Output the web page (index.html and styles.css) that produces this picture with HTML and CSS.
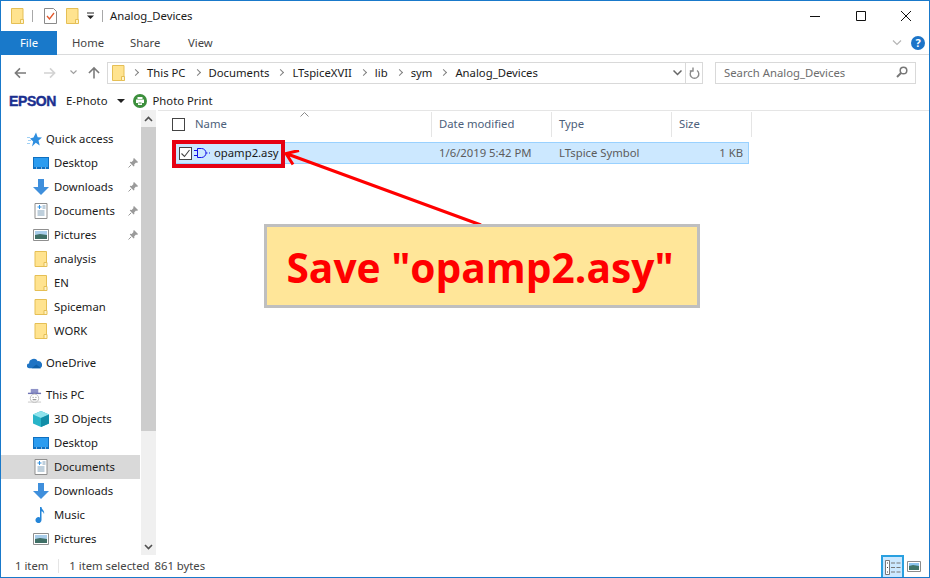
FILE: index.html
```html
<!DOCTYPE html>
<html lang="en">
<head>
    <meta charset="UTF-8">
    <title>Analog_Devices</title>
    <link rel="stylesheet" href="styles.css">
</head>
<body>
    <svg class="defs" width="0" height="0">
        <symbol id="folder" viewBox="0 0 13 16">
            <path d="M.5.5h11.5v15H.5z" fill="#ffe38f" stroke="#e5bf55"/>
            <path d="M9.5 15.5v-4h3v4z" fill="#fff3c8" stroke="#e5bf55"/>
        </symbol>
        <symbol id="desktop" viewBox="0 0 16 12">
            <path d="M0 0h16v12H0z" fill="#0f6fc0"/>
            <path d="M1 1h14v9H1z" fill="#2b9cf0"/>
            <path d="M3 11h1M8 11h1M12 11h1" stroke="#fff"/>
        </symbol>
        <symbol id="download" viewBox="0 0 16 16">
            <path d="M5 0h6v8h5l-8 8-8-8h5z" fill="#3f8fdc"/>
        </symbol>
        <symbol id="docs" viewBox="0 0 13 16">
            <path d="M.5.5h12v15H.5z" fill="#fff" stroke="#8f8f8f"/>
            <path d="M3 8h7M3 10h7M3 12h7" stroke="#7f9fb8"/>
            <path d="M5 2v4M3 4h4" stroke="#2f8fe0"/>
            <path d="M8 3h3M8 5h3" stroke="#7f9fb8"/>
        </symbol>
        <symbol id="pictures" viewBox="0 0 16 12">
            <path d="M.5.5h15v11H.5z" fill="#fff" stroke="#8f8f8f"/>
            <path d="M2 2h12v4H2z" fill="#a9cdea"/>
            <path d="M2 6l5-1 7 1v4H2z" fill="#3f6f66"/>
        </symbol>
        <symbol id="pin" viewBox="0 0 10 10">
            <path d="M6 0l4 4-1 1-1-.4L6.200 6.500 6.400 8 5.600 8.400 1.800 4.600 2.200 3.800 3.700 4 5.500 2.100 5.200 1z" fill="#9a9a9a"/>
            <path d="M3.200 6.800L.5 9.500" stroke="#9a9a9a"/>
        </symbol>
    </svg>

    <div class="window">
        <!-- Title bar -->
        <div class="titlebar">
            <svg class="qa-folder"><use href="#folder"/></svg>
            <span class="qa-sep"></span>
            <svg class="qa-props" viewBox="0 0 13 16">
                <path d="M.5.5h9l3 3v12H.5z" fill="#fff" stroke="#8a8a8a"/>
                <path d="M3 8l2.500 3L10 5" fill="none" stroke="#e2562a" stroke-width="1.300"/>
            </svg>
            <svg class="qa-folder2"><use href="#folder"/></svg>
            <svg class="qa-drop" viewBox="0 0 8 8">
                <path d="M0 1h7" stroke="#222"/>
                <path d="M0 3.500h7L3.500 7z" fill="#222"/>
            </svg>
            <span class="qa-sep qa-sep-2"></span>
            <span class="title">Analog_Devices</span>
            <div class="win-btns">
                <svg viewBox="0 0 45 10"><path d="M17 5.500h10" stroke="#111"/></svg>
                <svg viewBox="0 0 45 10"><path d="M18.500.5h9v9h-9z" fill="none" stroke="#111"/></svg>
                <svg viewBox="0 0 45 10"><path d="M18 0l10 10M28 0L18 10" stroke="#111"/></svg>
            </div>
        </div>

        <!-- Ribbon tabs -->
        <div class="ribbon">
            <span class="tab-file">File</span>
            <span class="tab">Home</span>
            <span class="tab">Share</span>
            <span class="tab">View</span>
            <svg class="ribbon-chev" viewBox="0 0 10 6"><path d="M1 .5l4 4 4-4" fill="none" stroke="#b5b5b5" stroke-width="1.200"/></svg>
            <span class="help">?</span>
        </div>

        <!-- Address row -->
        <div class="navrow">
            <svg class="nav-back" viewBox="0 0 13 12"><path d="M13 6H2M6.500 1L1.500 6l5 5" fill="none" stroke="#7a7a7a" stroke-width="1.700"/></svg>
            <svg class="nav-fwd" viewBox="0 0 13 12"><path d="M0 6h11M6.500 1l5 5-5 5" fill="none" stroke="#d2d2d2" stroke-width="1.700"/></svg>
            <svg class="nav-recent" viewBox="0 0 7 5"><path d="M.5.500l3 3 3-3" fill="none" stroke="#a0a0a0" stroke-width="1.200"/></svg>
            <svg class="nav-up" viewBox="0 0 13 13"><path d="M6.500 13V2M1 7l5.500-5.500L12 7" fill="none" stroke="#7a7a7a" stroke-width="1.700"/></svg>
            <div class="address">
                <svg class="addr-folder"><use href="#folder"/></svg>
                <div class="crumbs">
                    <span class="crumb-sep"></span><span>This PC</span>
                    <span class="crumb-sep"></span><span>Documents</span>
                    <span class="crumb-sep"></span><span>LTspiceXVII</span>
                    <span class="crumb-sep"></span><span>lib</span>
                    <span class="crumb-sep"></span><span>sym</span>
                    <span class="crumb-sep"></span><span>Analog_Devices</span>
                </div>
                <svg class="addr-drop" viewBox="0 0 9 6"><path d="M.5.500l4 4 4-4" fill="none" stroke="#666" stroke-width="1.500"/></svg>
                <div class="addr-refresh">
                    <svg viewBox="0 0 11 12"><path d="M3 3.500a4.300 4.300 0 1 0 5 0M4 .5v3.500H.8" fill="none" stroke="#8a8a8a" stroke-width="1.400"/></svg>
                </div>
            </div>
            <div class="search">
                <span>Search Analog_Devices</span>
                <svg viewBox="0 0 12 12"><circle cx="7.500" cy="4.500" r="3.300" fill="none" stroke="#777" stroke-width="1.500"/><path d="M5 7l-4 4" stroke="#777" stroke-width="2"/></svg>
            </div>
        </div>

        <!-- Epson toolbar -->
        <div class="epson-bar">
            <span class="epson-logo">EPSON</span>
            <span class="epson-item">E-Photo</span>
            <svg class="epson-drop" viewBox="0 0 8 4"><path d="M0 0h8L4 4z" fill="#222"/></svg>
            <svg class="epson-print" viewBox="0 0 14 14">
                <circle cx="7" cy="7" r="7" fill="#3c8f3c"/>
                <path d="M4.500 3h5v2h-5zM3 5.500h8V9H3zM5 8h4v3H5z" fill="#fff"/>
                <path d="M5.500 9h3" stroke="#3c8f3c"/>
            </svg>
            <span class="epson-item">Photo Print</span>
        </div>

        <div class="body">
            <!-- Navigation pane -->
            <div class="navpane">
                <div class="tree">
                    <div class="row top">
                        <svg class="ic-top" viewBox="0 0 15 14"><path d="M9 0l1.700 4.700L15 5l-3.500 3 1.200 5-3.900-2.700L5 14l1.200-5L3 6l3.500-.9z" fill="#2f8fe0"/><path d="M0 5h3M1 8h3M0 11h3" stroke="#9fd0f5"/></svg>
                        <span>Quick access</span>
                    </div>
                    <div class="row"><svg class="ic"><use href="#desktop"/></svg><span>Desktop</span><svg class="pin"><use href="#pin"/></svg></div>
                    <div class="row"><svg class="ic"><use href="#download"/></svg><span>Downloads</span><svg class="pin"><use href="#pin"/></svg></div>
                    <div class="row"><svg class="ic"><use href="#docs"/></svg><span>Documents</span><svg class="pin"><use href="#pin"/></svg></div>
                    <div class="row"><svg class="ic"><use href="#pictures"/></svg><span>Pictures</span><svg class="pin"><use href="#pin"/></svg></div>
                    <div class="row"><svg class="ic"><use href="#folder"/></svg><span>analysis</span></div>
                    <div class="row"><svg class="ic"><use href="#folder"/></svg><span>EN</span></div>
                    <div class="row"><svg class="ic"><use href="#folder"/></svg><span>Spiceman</span></div>
                    <div class="row"><svg class="ic"><use href="#folder"/></svg><span>WORK</span></div>

                    <div class="row top group">
                        <svg class="ic-top" viewBox="0 0 16 11"><path d="M2.500 10.500a2.500 2.500 0 0 1-.3-5A5 5 0 0 1 11.500 3 4 4 0 0 1 14 10.500z" fill="#1f74c4"/><path d="M5 10.500l5-4 5 4z" fill="#0f5fa8"/></svg>
                        <span>OneDrive</span>
                    </div>
                    <div class="row top group">
                        <svg class="ic-top" viewBox="0 0 16 16"><path d="M4 1h8v5H4z" fill="#8f93c8"/><path d="M1 5h14v1.500H1z" fill="#6f74b4"/><circle cx="8" cy="11" r="4.500" fill="#fff" stroke="#bdbdbd"/><path d="M1 15h14" stroke="#c8c8c8"/><path d="M6 10h1M9 10h1M6 12.500h4" stroke="#777"/></svg>
                        <span>This PC</span>
                    </div>
                    <div class="row"><svg class="ic" viewBox="0 0 16 16"><path d="M8 0l8 3.500v9L8 16 0 12.500v-9z" fill="#28b4c8"/><path d="M8 7L0 3.500 8 0l8 3.500z" fill="#8fe3ec"/><path d="M8 7v9l8-3.500v-9z" fill="#128ea8"/></svg><span>3D Objects</span></div>
                    <div class="row"><svg class="ic"><use href="#desktop"/></svg><span>Desktop</span></div>
                    <div class="row selected"><svg class="ic"><use href="#docs"/></svg><span>Documents</span></div>
                    <div class="row"><svg class="ic"><use href="#download"/></svg><span>Downloads</span></div>
                    <div class="row"><svg class="ic" viewBox="0 0 16 16"><path d="M7 0h1.500c.3 3 3.500 3.500 2.500 7-.5-2-1.500-2.500-2.500-2.800V13a3 3 0 1 1-1.500-2.500z" fill="#2485d8"/></svg><span>Music</span></div>
                    <div class="row"><svg class="ic"><use href="#pictures"/></svg><span>Pictures</span></div>
                </div>
            </div>

            <div class="scrollbar">
                <svg class="sb-arrow" viewBox="0 0 9 6"><path d="M1 5l3.500-3.500L8 5" fill="none" stroke="#505050" stroke-width="1.600"/></svg>
                <div class="sb-thumb"></div>
                <svg class="sb-arrow sb-down" viewBox="0 0 9 6"><path d="M1 1l3.500 3.500L8 1" fill="none" stroke="#505050" stroke-width="1.600"/></svg>
            </div>

            <!-- File list -->
            <div class="files">
                <div class="file-head">
                    <span class="cb-cell"><span class="checkbox"></span></span>
                    <span class="col col-name">Name</span>
                    <span class="col">Date modified</span>
                    <span class="col">Type</span>
                    <span class="col">Size</span>
                </div>
                <svg class="sort-chev" viewBox="0 0 9 5"><path d="M.5 4.500l4-4 4 4" fill="none" stroke="#8a8a8a"/></svg>
                <div class="file-row">
                    <span class="cb-cell"><span class="checkbox checked">
                        <svg viewBox="0 0 11 11"><path d="M1.500 5.500l3 3 5-6.500" fill="none" stroke="#444" stroke-width="1.100"/></svg>
                    </span></span>
                    <span class="col col-file">
                        <svg class="asy" viewBox="0 0 16 12"><path d="M3.500 1.500h4a4.500 4.500 0 0 1 0 9h-4zM0 3.500h3.500M0 8.500h3.500M12 6h1.500M15 6h1" fill="none" stroke="#1212e8"/></svg>
                        <span class="fname">opamp2.asy</span>
                    </span>
                    <span class="col col-sub">1/6/2019 5:42 PM</span>
                    <span class="col col-sub">LTspice Symbol</span>
                    <span class="col col-size">1 KB</span>
                </div>
            </div>
        </div>

        <!-- Status bar -->
        <div class="status">
            <span class="st-count">1 item</span>
            <span class="st-sep"></span>
            <span class="st-sel">1 item selected</span>
            <span class="st-bytes">861 bytes</span>
            <div class="views">
                <span class="view-details">
                    <svg viewBox="0 0 16 15"><path d="M.5.500h4v14h-4z" fill="#fff" stroke="#777"/><path d="M2 3h1M2 7.500h1M2 12h1" stroke="#444"/><path d="M6 3h4M11.500 3h4M6 7.500h4M11.500 7.500h4M6 12h4M11.500 12h4" stroke="#777" stroke-width="1.200"/></svg>
                </span>
                <svg class="view-thumb" viewBox="0 0 14 11"><path d="M.5.500h13v10H.5z" fill="#fff" stroke="#8c8c8c"/><path d="M2 2h10v3H2z" fill="#8cc4ee"/><path d="M2 5l4-1 6 1v4H2z" fill="#3f7468"/></svg>
            </div>
        </div>

        <!-- Annotation -->
        <div class="red-box"></div>
        <svg class="red-arrow" viewBox="0 0 210 80">
            <path d="M197 75L2 3.500M15 .5L2 3.500l7 11" fill="none" stroke="#ff0000" stroke-width="3"/>
        </svg>
        <div class="callout">Save "opamp2.asy"</div>
    </div>
</body>
</html>
```

FILE: styles.css
```css
* {
    box-sizing: border-box;
}

body {
    margin: 0;
    background: #fff;
    color: #1a1a1a;
    font-family: "Noto Sans", "Open Sans", sans-serif;
    font-size: 11.3px;
}

svg {
    display: block;
    flex: none;
}

.defs {
    position: absolute;
}

.window {
    position: relative;
    width: 930px;
    height: 578px;
    border: 1px solid #1979ca;
    display: flex;
    flex-direction: column;
    overflow: hidden;
}

/* title bar */
.titlebar {
    height: 30px;
    display: flex;
    align-items: center;
    padding-left: 10px;
}

.qa-folder, .qa-folder2 {
    width: 13px;
    height: 16px;
}

.qa-sep {
    width: 1px;
    height: 12px;
    background: #a8a8a8;
    margin-left: 8px;
}

.qa-props {
    width: 13px;
    height: 16px;
    margin-left: 11px;
}

.qa-folder2 {
    margin-left: 9px;
}

.qa-drop {
    width: 8px;
    height: 8px;
    margin-left: 8px;
}

.qa-sep-2 {
    margin-left: 7px;
}

.title {
    margin: 0 0 2px 7px;
}

.win-btns {
    margin-left: auto;
    margin-right: 1px;
    display: flex;
}

.win-btns svg {
    width: 45px;
    height: 10px;
}

/* ribbon */
.ribbon {
    height: 24px;
    display: flex;
    align-items: center;
    border-bottom: 1px solid #dadbdc;
    color: #444;
}

.tab-file {
    width: 56px;
    height: 24px;
    background: #1979ca;
    color: #fff;
    text-align: center;
    line-height: 23px;
}

.tab {
    width: 58px;
    padding-left: 15px;
}

.ribbon-chev {
    width: 10px;
    height: 6px;
    margin-left: auto;
}

.help {
    width: 14px;
    height: 14px;
    margin: 0 4px 0 9px;
    border-radius: 50%;
    background: #1c74c8;
    color: #fff;
    font-weight: 700;
    font-size: 11px;
    line-height: 14px;
    text-align: center;
}

/* address row */
.navrow {
    height: 35px;
    display: flex;
    align-items: center;
    position: relative;
}

.nav-back {
    width: 12px;
    height: 12px;
    margin-left: 13px;
}

.nav-fwd {
    width: 12px;
    height: 12px;
    margin-left: 18px;
}

.nav-recent {
    width: 7px;
    height: 5px;
    margin-left: 14px;
}

.nav-up {
    width: 12px;
    height: 13px;
    margin-left: 11px;
}

.address {
    width: 596px;
    height: 22px;
    margin-left: 7px;
    border: 1px solid #d9d9d9;
    display: flex;
    align-items: center;
    padding-left: 4px;
    color: #1a1a1a;
}

.addr-folder {
    width: 13px;
    height: 16px;
}

.crumbs {
    display: flex;
    align-items: center;
    margin: 0 0 1px 8px;
    flex: 1;
    white-space: nowrap;
}

.crumb-sep {
    width: 5px;
    height: 5px;
    border-top: 1.500px solid #808080;
    border-right: 1.500px solid #808080;
    transform: rotate(45deg);
    margin: 0 9px 0 9px;
}

.crumb-sep:first-child {
    margin-left: 0;
}

.addr-drop {
    width: 9px;
    height: 6px;
    margin-right: 3px;
}

.addr-refresh {
    width: 17px;
    height: 20px;
    border-left: 1px solid #d9d9d9;
    display: flex;
    align-items: center;
    justify-content: center;
}

.addr-refresh svg {
    width: 11px;
    height: 12px;
}

.search {
    width: 201px;
    height: 22px;
    margin-left: 12px;
    border: 1px solid #d9d9d9;
    display: flex;
    align-items: center;
    justify-content: space-between;
    padding: 0 7px 1px 8px;
    color: #6d6d6d;
}

.search svg {
    width: 12px;
    height: 12px;
}

/* epson toolbar */
.epson-bar {
    height: 20px;
    padding-top: 1px;
    display: flex;
    align-items: center;
    padding-left: 8px;
}

.epson-logo {
    font-family: "Liberation Sans", sans-serif;
    font-weight: 700;
    font-size: 14px;
    color: #1b2f8f;
    letter-spacing: -0.4px;
    width: 57px;
    -webkit-text-stroke: 0.4px #1b2f8f;
}

.epson-item {
    white-space: nowrap;
}

.epson-drop {
    width: 8px;
    height: 4px;
    margin: 0 8px 0 10px;
}

.epson-print {
    width: 14px;
    height: 14px;
    margin-right: 5px;
}

/* body */
.body {
    flex: 1;
    min-height: 0;
    display: flex;
}

.navpane {
    width: 140px;
    padding-top: 17px;
    overflow: hidden;
}

.row {
    height: 24px;
    display: flex;
    align-items: center;
    padding-left: 32px;
    color: #1a1a1a;
}

.row span {
    margin-bottom: 2px;
}

.row.top {
    padding-left: 26px;
}

.row.group {
    margin-top: 8px;
}

.row.selected {
    background: #d9d9d9;
    margin-right: 1px;
}

.ic {
    width: 16px;
    height: 16px;
    margin-right: 5px;
}

.ic-top {
    width: 15px;
    height: 15px;
    margin-right: 4px;
}

.pin {
    width: 10px;
    height: 10px;
    margin-left: auto;
    margin-right: 3px;
}

.scrollbar {
    width: 15px;
    background: #f0f0f0;
    position: relative;
    padding-top: 17px;
}

.sb-arrow {
    position: absolute;
    top: 6px;
    left: 3px;
    width: 9px;
    height: 6px;
}

.sb-down {
    top: auto;
    bottom: 5px;
}

.sb-thumb {
    height: 304px;
    background: #cdcdcd;
}

/* file list */
.files {
    flex: 1;
    position: relative;
    padding-left: 1px;
    min-width: 0;
}

.file-head, .file-row {
    display: grid;
    align-items: center;
}

.file-head {
    height: 26px;
    border-top: 1px solid #e5e5e5;
    width: 773px;
    color: #4c607a;
    margin-left: 1px;
    padding-left: 1px;
    padding-top: 1px;
    grid-template-columns: 26px 247px 120px 120px 80px;
}

.col {
    padding-left: 7px;
    border-right: 1px solid #e5e5e5;
    height: 25px;
    line-height: 23px;
}

.cb-cell {
    display: flex;
    justify-content: flex-end;
}

.col-name {
    padding-left: 10px;
}

.checkbox {
    width: 13px;
    height: 13px;
    border: 1px solid #444;
    background: #fff;
}

.checkbox svg {
    width: 11px;
    height: 11px;
}

.sort-chev {
    position: absolute;
    left: 144px;
    top: 2px;
    width: 9px;
    height: 5px;
}

.file-row {
    height: 22px;
    margin-top: 6px;
    margin-left: 17px;
    width: 575px;
    background: #cce8ff;
    border: 1px solid #99d1ff;
    grid-template-columns: 17px 240px 120px 120px 76px;
}

.file-row .col {
    border-right: none;
    height: 20px;
    line-height: 20px;
    color: #5c5c5c;
}

.file-row .col-file {
    display: flex;
    align-items: center;
    padding-left: 0;
    color: #1a1a1a;
}

.asy {
    width: 16px;
    height: 12px;
    margin: 0 4px 0 2px;
}

.col-size {
    text-align: right;
    padding-right: 5px;
}

/* status bar */
.status {
    height: 22px;
    display: flex;
    align-items: center;
    padding: 0 0 1px 14px;
    color: #444;
}

.st-sep {
    width: 1px;
    height: 14px;
    background: #e5e5e5;
    margin: 0 10px;
}

.st-sel {
    margin-right: 5px;
}

.views {
    margin-left: auto;
    margin-right: 8px;
    margin-bottom: -1px;
    display: flex;
    align-items: center;
}

.view-details {
    width: 23px;
    height: 23px;
    background: #cce8ff;
    border: 2px solid #29a0e0;
    border-bottom: 0;
    display: flex;
    align-items: center;
    justify-content: center;
}

.view-details svg {
    width: 16px;
    height: 15px;
}

.view-thumb {
    width: 14px;
    height: 11px;
    margin-left: 3px;
}

/* annotation on top of the window */
.red-box {
    position: absolute;
    left: 171px;
    top: 139px;
    width: 113px;
    height: 28px;
    border: 4px solid #e60012;
}

.red-arrow {
    position: absolute;
    left: 283px;
    top: 149px;
    width: 210px;
    height: 80px;
}

.callout {
    position: absolute;
    left: 263px;
    top: 223px;
    width: 436px;
    height: 84px;
    padding-right: 4px;
    background: #ffe699;
    border: 3px solid #bfbfbf;
    color: #ff0000;
    font-family: "Open Sans", sans-serif;
    font-weight: 700;
    font-size: 40.7px;
    line-height: 81px;
    text-align: center;
    white-space: nowrap;
}
```
